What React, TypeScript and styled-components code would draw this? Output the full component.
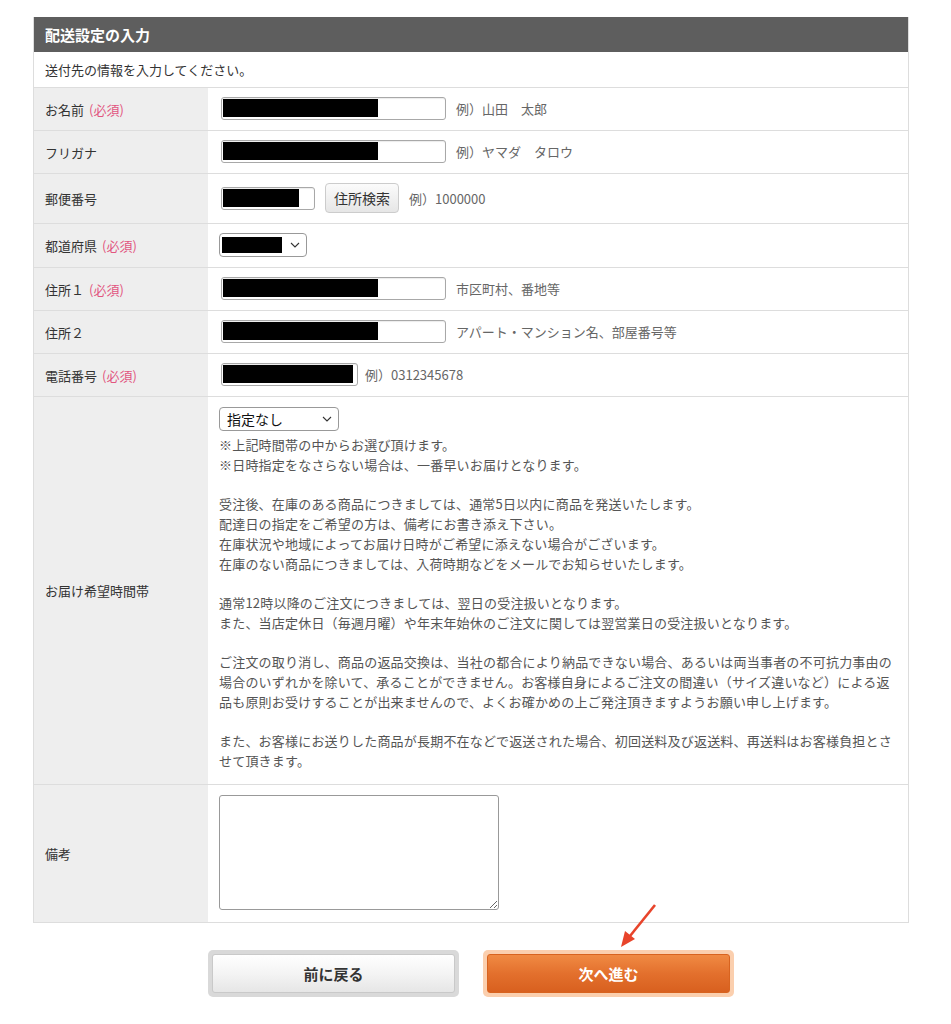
import React from "react";
import styled, { createGlobalStyle } from "styled-components";

const GlobalStyle = createGlobalStyle`
  body {
    margin: 0;
    background: #fff;
    font-family: "Noto Sans CJK JP", "Noto Sans", sans-serif;
    color: #333;
  }
`;

const Page = styled.div`
  width: 876px;
  margin: 17px 0 0 33px;
  padding-bottom: 30px;
`;

const Form = styled.div`
  border-left: 1px solid #ddd;
  border-right: 1px solid #ddd;
`;

const Header = styled.div`
  height: 35px;
  background: #5e5e5e;
  color: #fff;
  font-size: 15px;
  font-weight: bold;
  display: flex;
  align-items: center;
  padding: 0 11px;
`;

const Intro = styled.div`
  height: 36px;
  box-sizing: border-box;
  border-bottom: 1px solid #ddd;
  display: flex;
  align-items: center;
  padding: 0 11px;
  font-size: 13px;
`;

const Row = styled.div`
  display: grid;
  grid-template-columns: 174px 1fr;
  border-bottom: 1px solid #ddd;
`;

const Label = styled.div`
  background: #eee;
  display: flex;
  align-items: center;
  padding: 0 11px;
  font-size: 13px;
  color: #333;
`;

const Required = styled.span`
  color: #e2557f;
  margin-left: 5px;
`;

const Value = styled.div`
  display: flex;
  align-items: center;
  gap: 10px;
  padding: 9px 14px 10px 13px;
`;

const BlockValue = styled.div`
  padding: 10px 14px 13px 11px;
`;

const TextBox = styled.div<{ $w: number }>`
  width: ${(p) => p.$w}px;
  height: 23px;
  box-sizing: border-box;
  border: 1px solid #a8a8a8;
  border-radius: 3px;
  box-shadow: inset 0 1px 1px rgba(0, 0, 0, 0.08);
  padding: 1px;
  background: #fff;
`;

const Redacted = styled.div<{ $w: number; $h?: number }>`
  width: ${(p) => p.$w}px;
  height: ${(p) => p.$h ?? 18}px;
  background: #000;
`;

const SearchButton = styled.button`
  width: 74px;
  height: 30px;
  border: 1px solid #ccc;
  border-radius: 4px;
  background: linear-gradient(#fbfbfb, #e6e6e6);
  font-family: inherit;
  font-size: 14px;
  color: #333;
  padding: 0;
`;

const Hint = styled.span<{ $gap?: number }>`
  font-size: 13px;
  color: #666;
  margin-left: ${(p) => p.$gap ?? 0}px;
`;

const SelectBox = styled.div<{ $w: number }>`
  width: ${(p) => p.$w}px;
  height: 24px;
  box-sizing: border-box;
  border: 1px solid #999;
  border-radius: 4px;
  background: #fff;
  display: flex;
  align-items: center;
  justify-content: space-between;
  padding: 0 6px 0 2px;
  font-size: 14px;
  color: #111;
`;

const SelectText = styled.span`
  padding-left: 5px;
`;

const Notes = styled.div`
  margin-top: 4px;
  font-size: 13px;
  line-height: 19.75px;
  color: #555;
  letter-spacing: 0.2px;
`;

const Line = styled.div`
  white-space: nowrap;
  min-height: 19.75px;
`;

const TextArea = styled.textarea`
  display: block;
  width: 280px;
  height: 115px;
  box-sizing: border-box;
  border: 1px solid #999;
  border-radius: 3px;
  font-family: inherit;
`;

const Buttons = styled.div`
  position: relative;
  display: flex;
  justify-content: center;
  gap: 24px;
  margin-top: 27px;
`;

const BtnFrame = styled.div<{ $primary?: boolean }>`
  width: 251px;
  height: 47px;
  box-sizing: border-box;
  padding: 4px;
  border-radius: 5px;
  background: ${(p) => (p.$primary ? "#fbcfae" : "#d9d9d9")};
`;

const BtnInner = styled.div<{ $primary?: boolean }>`
  height: 100%;
  box-sizing: border-box;
  border-radius: 3px;
  border: 1px solid ${(p) => (p.$primary ? "#d8631f" : "#c9c9c9")};
  background: ${(p) =>
    p.$primary
      ? "linear-gradient(#f08a43, #e3702d 50%, #d8601f)"
      : "linear-gradient(#ffffff, #f4f4f4 50%, #e6e6e6)"};
  color: ${(p) => (p.$primary ? "#fff" : "#333")};
  font-size: 15px;
  font-weight: bold;
  display: flex;
  align-items: center;
  justify-content: center;
`;

const Arrow = styled.svg`
  position: absolute;
  left: 580px;
  top: -47px;
`;

function Chevron() {
  return (
    <svg width="10" height="6" viewBox="0 0 10 6">
      <path d="M1 1l4 4 4-4" fill="none" stroke="#333" strokeWidth="1.1" />
    </svg>
  );
}

const notes = [
  "※上記時間帯の中からお選び頂けます。",
  "※日時指定をなさらない場合は、一番早いお届けとなります。",
  "",
  "受注後、在庫のある商品につきましては、通常5日以内に商品を発送いたします。",
  "配達日の指定をご希望の方は、備考にお書き添え下さい。",
  "在庫状況や地域によってお届け日時がご希望に添えない場合がございます。",
  "在庫のない商品につきましては、入荷時期などをメールでお知らせいたします。",
  "",
  "通常12時以降のご注文につきましては、翌日の受注扱いとなります。",
  "また、当店定休日（毎週月曜）や年末年始休のご注文に関しては翌営業日の受注扱いとなります。",
  "",
  "ご注文の取り消し、商品の返品交換は、当社の都合により納品できない場合、あるいは両当事者の不可抗力事由の",
  "場合のいずれかを除いて、承ることができません。お客様自身によるご注文の間違い（サイズ違いなど）による返",
  "品も原則お受けすることが出来ませんので、よくお確かめの上ご発注頂きますようお願い申し上げます。",
  "",
  "また、お客様にお送りした商品が長期不在などで返送された場合、初回送料及び返送料、再送料はお客様負担とさ",
  "せて頂きます。",
];

export default function App() {
  return (
    <Page>
      <GlobalStyle />
      <Form>
        <Header>配送設定の入力</Header>
        <Intro>送付先の情報を入力してください。</Intro>

        <Row>
          <Label>
            お名前<Required>(必須)</Required>
          </Label>
          <Value>
            <TextBox $w={225}>
              <Redacted $w={155} />
            </TextBox>
            <Hint>例）山田　太郎</Hint>
          </Value>
        </Row>

        <Row>
          <Label>フリガナ</Label>
          <Value>
            <TextBox $w={225}>
              <Redacted $w={155} />
            </TextBox>
            <Hint>例）ヤマダ　タロウ</Hint>
          </Value>
        </Row>

        <Row>
          <Label>郵便番号</Label>
          <Value>
            <TextBox $w={94}>
              <Redacted $w={76} />
            </TextBox>
            <SearchButton>住所検索</SearchButton>
            <Hint>例）1000000</Hint>
          </Value>
        </Row>

        <Row>
          <Label>
            都道府県<Required>(必須)</Required>
          </Label>
          <Value style={{ paddingLeft: 11 }}>
            <SelectBox $w={88}>
              <Redacted $w={60} $h={16} />
              <Chevron />
            </SelectBox>
          </Value>
        </Row>

        <Row>
          <Label>
            住所１<Required>(必須)</Required>
          </Label>
          <Value>
            <TextBox $w={225}>
              <Redacted $w={155} />
            </TextBox>
            <Hint>市区町村、番地等</Hint>
          </Value>
        </Row>

        <Row>
          <Label>住所２</Label>
          <Value>
            <TextBox $w={225}>
              <Redacted $w={155} />
            </TextBox>
            <Hint>アパート・マンション名、部屋番号等</Hint>
          </Value>
        </Row>

        <Row>
          <Label>
            電話番号<Required>(必須)</Required>
          </Label>
          <Value>
            <TextBox $w={137}>
              <Redacted $w={130} />
            </TextBox>
            <Hint $gap={-3}>例）0312345678</Hint>
          </Value>
        </Row>

        <Row>
          <Label>お届け希望時間帯</Label>
          <BlockValue>
            <SelectBox $w={120}>
              <SelectText>指定なし</SelectText>
              <Chevron />
            </SelectBox>
            <Notes>
              {notes.map((n, i) => (
                <Line key={i}>{n}</Line>
              ))}
            </Notes>
          </BlockValue>
        </Row>

        <Row>
          <Label>備考</Label>
          <Value style={{ padding: "10px 14px 12px 11px" }}>
            <TextArea />
          </Value>
        </Row>
      </Form>

      <Buttons>
        <BtnFrame>
          <BtnInner>前に戻る</BtnInner>
        </BtnFrame>
        <BtnFrame $primary>
          <BtnInner $primary>次へ進む</BtnInner>
        </BtnFrame>
        <Arrow width="48" height="48" viewBox="0 0 48 48">
          <line x1="42" y1="2" x2="17" y2="33" stroke="#e8442b" strokeWidth="2.6" />
          <path d="M8 44 L12 28 L22 36 Z" fill="#e8442b" />
        </Arrow>
      </Buttons>
    </Page>
  );
}
